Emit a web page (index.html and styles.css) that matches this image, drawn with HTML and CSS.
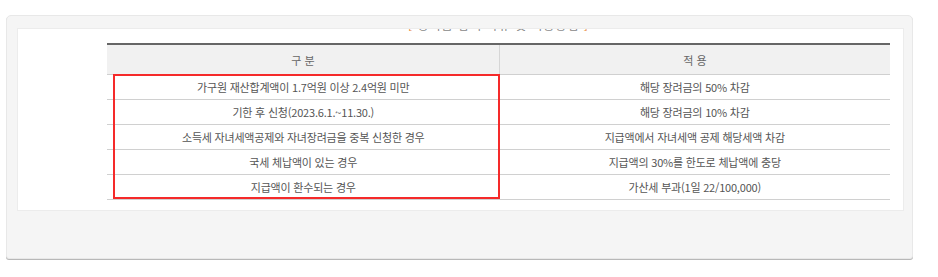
FILE: index.html
```html
<!DOCTYPE html>
<html lang="ko">
<head>
<meta charset="utf-8">
<link rel="stylesheet" href="styles.css">
</head>
<body>
<div class="frame">
  <div class="panel">
    <div class="wrap">
      <div class="caption"><span class="br">[</span> 장려금 감액 사유 및 적용방법 <span class="br">]</span></div>
      <div class="tbl">
        <table>
          <thead>
            <tr><th>구 분</th><th>적 용</th></tr>
          </thead>
          <tbody>
            <tr><td>가구원 재산합계액이 1.7억원 이상 2.4억원 미만</td><td>해당 장려금의 50% 차감</td></tr>
            <tr><td>기한 후 신청(2023.6.1.~11.30.)</td><td>해당 장려금의 10% 차감</td></tr>
            <tr><td>소득세 자녀세액공제와 자녀장려금을 중복 신청한 경우</td><td>지급액에서 자녀세액 공제 해당세액 차감</td></tr>
            <tr><td>국세 체납액이 있는 경우</td><td>지급액의 30%를 한도로 체납액에 충당</td></tr>
            <tr><td>지급액이 환수되는 경우</td><td>가산세 부과(1일 22/100,000)</td></tr>
          </tbody>
        </table>
        <div class="mark"></div>
      </div>
    </div>
  </div>
</div>
</body>
</html>
```
FILE: styles.css
```css
html, body {
  margin: 0;
  padding: 0;
  background: #ffffff;
}
body {
  width: 938px;
  height: 277px;
  overflow: hidden;
  font-family: "Noto Sans CJK KR", "Noto Sans", sans-serif;
}
.frame {
  margin: 15px 0 0 6px;
  width: 907px;
  height: 244px;
  box-sizing: border-box;
  padding: 13px 9px 0 11px;
  background: #f5f5f5;
  border: 1px solid #e8e8e8;
  border-radius: 5px 5px 3px 3px;
  box-shadow: 0 1px 0 #b8b8b8;
}
.panel {
  width: 885px;
  height: 181px;
  background: #ffffff;
  overflow: hidden;
  box-shadow: 0 0 0 1px #ececec;
}
.wrap {
  width: 783px;
  margin-left: 89px;
}
.caption {
  height: 14px;
  line-height: 14px;
  margin-top: -11px;
  text-align: center;
  font-size: 12px;
  color: #888;
  letter-spacing: 1px;
}
.caption .br {
  color: #e8893a;
}
.tbl {
  position: relative;
  margin-top: 11px;
}
table {
  width: 783px;
  border-collapse: collapse;
  table-layout: fixed;
  font-size: 11px;
  color: #555;
}
th {
  height: 29px;
  padding: 0;
  background: #f1f1f1;
  border-top: 2px solid #666;
  border-bottom: 1px solid #d0d0d0;
  font-weight: normal;
  color: #666;
  font-size: 11px;
}
th:first-child {
  width: 392px;
  border-right: 1px solid #d6d6d6;
}
td {
  height: 24px;
  padding: 0;
  text-align: center;
  border-bottom: 1px solid #d0d0d0;
  letter-spacing: -0.2px;
}
.mark {
  position: absolute;
  left: 6px;
  top: 31px;
  width: 387px;
  height: 125px;
  box-sizing: border-box;
  border: 2px solid #f52a2a;
}
```
